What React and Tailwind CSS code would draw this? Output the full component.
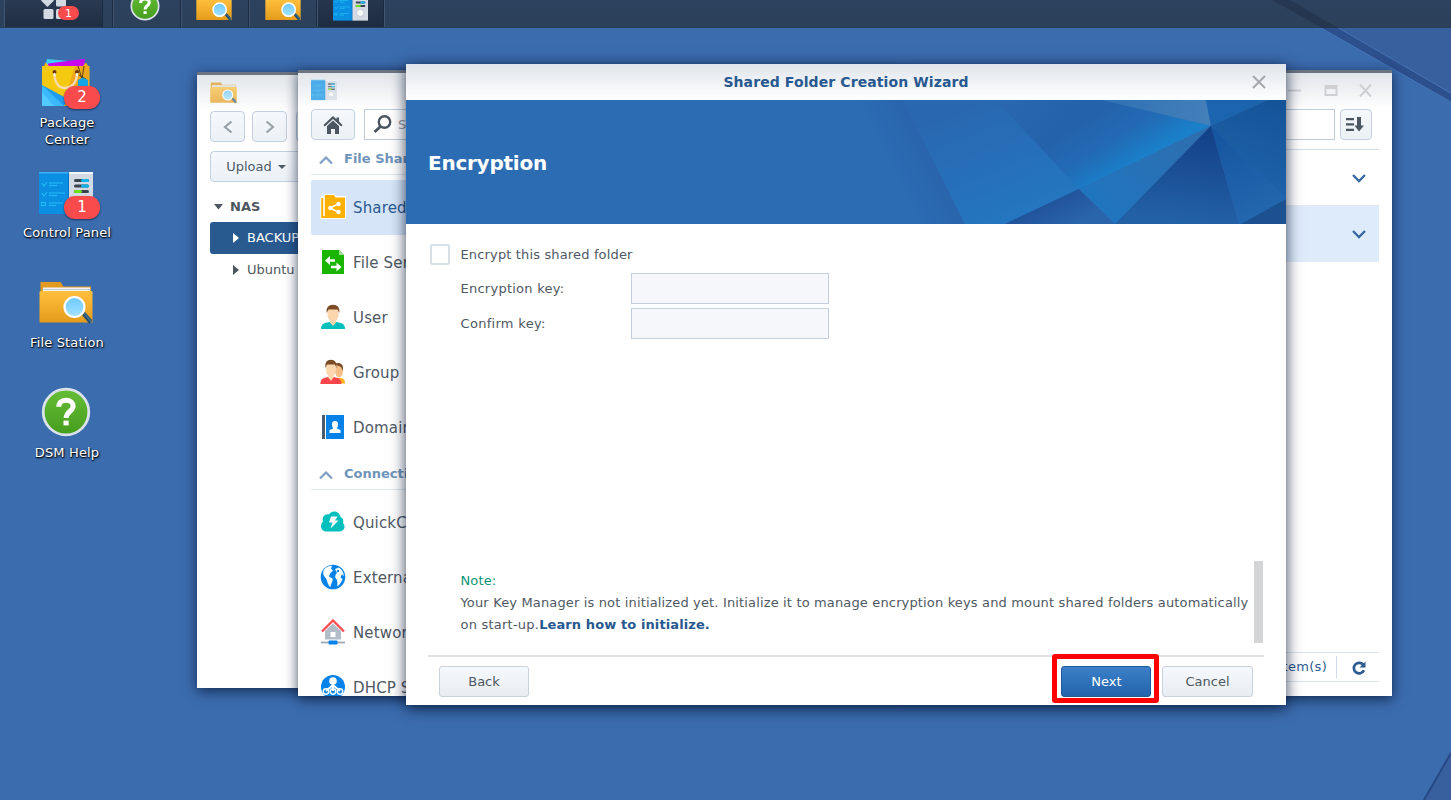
import React from "react";

function FolderIcon({ className }) {
  return (
    <svg className={className} viewBox="0 0 54 44" fill="none">
      <defs>
        <linearGradient id="folderFront" x1="0" y1="0" x2="0" y2="1">
          <stop offset="0" stopColor="#ffc03d" />
          <stop offset="1" stopColor="#e59c1c" />
        </linearGradient>
        <linearGradient id="lens" x1="0" y1="0" x2="0" y2="1">
          <stop offset="0" stopColor="#6cc8fb" />
          <stop offset="1" stopColor="#a5e3ff" />
        </linearGradient>
      </defs>
      <path d="M1.500 1h20l3 4.500h27.500V20H1.500z" fill="#e09a20" />
      <path d="M4 6.500h47v8H4z" fill="#f5f7f8" />
      <path d="M3 8.500h49M3 10.500h49" stroke="#aab6c0" strokeWidth="0.700" />
      <path d="M.5 11.500c0-1 .5-1.500 1.500-1.500h50c1 0 1.500.5 1.500 1.500V41.500H.5z" fill="url(#folderFront)" />
      <path d="M43 34l3-3 7 8-2.500 4z" fill="#24506f" />
      <path d="M45 32l7.500 9" stroke="#3b7192" strokeWidth="1.500" />
      <circle cx="35.500" cy="26" r="10" fill="url(#lens)" stroke="#fff" strokeWidth="2.200" />
    </svg>
  );
}

function PanelIcon({ className }) {
  return (
    <svg className={className} viewBox="0 0 54 42" fill="none">
      <path d="M0 0h30v42H0z" fill="#0a8fe3" />
      <path d="M0 0h30v1.500H0z" fill="#3fb2f5" />
      <path d="M29 0l1 1v41h-1z" fill="#0873c4" />
      <path d="M30 0h24v42H30z" fill="#d4dae4" />
      <path d="M30 0h24v2H30z" fill="#f3f6fa" />
      <path d="M3 11l2 3 3-4M3 21l2 3 3-4M2.500 30.500h4v3h-4zM10 11h14M10 13.500h8M10 21h16M10 23.500h8M10 31h14M10 33.500h7" stroke="#25bdf7" strokeWidth="1.100" />
      <rect x="35" y="7" width="15" height="3" rx="1.500" fill="#39444f" />
      <rect x="42" y="7" width="8" height="3" rx="1.500" fill="#12b5ee" />
      <rect x="35" y="12.500" width="15" height="3" rx="1.500" fill="#39444f" />
      <rect x="42" y="12.500" width="8" height="3" rx="1.500" fill="#12b5ee" />
      <rect x="35" y="18" width="15" height="3" rx="1.500" fill="#39444f" />
      <rect x="35" y="18" width="8" height="3" rx="1.500" fill="#6be014" />
      <circle cx="42" cy="30" r="5.500" fill="#f7f9fa" stroke="#b5becb" />
    </svg>
  );
}

function PackageIcon({ className }) {
  return (
    <svg className={className} viewBox="0 0 48 49" fill="none">
      <path d="M5 1l22 2-2 7H3z" fill="#3bd0f5" />
      <path d="M6 5.500L43 .8 42 10H6z" fill="#ca08ee" />
      <path d="M0 8h2l1.500-3.500L7 8h34l3-3.500L46 8h1.500v40H0z" fill="#f3b312" />
      <path d="M0 8h34L22 48H0z" fill="#f5c90f" />
      <path d="M33 8h14v40H20z" fill="#eca51d" opacity=".8" />
      <path d="M0 27l26 14-4 7H0z" fill="#1f9df0" />
      <path d="M0 27l22 21H0z" fill="#3bb9fb" />
      <path d="M0 48V34l12 14z" fill="#51cafd" />
      <path d="M12.500 15c0 11 5 15 10.500 15S35 26 35 15" stroke="#f8dcae" strokeWidth="2.400" />
      <circle cx="12.500" cy="14" r="2" fill="#6d3a00" />
      <circle cx="35" cy="14" r="2" fill="#6d3a00" />
      <path d="M12.500 15v3M35 15v3" stroke="#fff" strokeWidth="1.600" />
      <path d="M36 8l4 13 2-13M37 17l7 4" stroke="#5d4210" strokeWidth="1" />
      <path d="M36 22l5-2.500L46 22v9H36z" fill="#14a5e8" />
    </svg>
  );
}

function HelpIcon({ className }) {
  return (
    <svg className={className} viewBox="0 0 50 50" fill="none">
      <defs>
        <linearGradient id="helpGreen" x1="0" y1="0" x2="0" y2="1">
          <stop offset="0" stopColor="#66bd36" />
          <stop offset="1" stopColor="#459d1d" />
        </linearGradient>
      </defs>
      <circle cx="25" cy="25" r="22.800" fill="url(#helpGreen)" stroke="#dbe2ea" strokeWidth="2.800" />
      <path d="M17.800 19.800c0-4.300 3-6.500 7.300-6.500s7 2.300 7 5.900c0 5.200-6.900 5-6.900 11.800" stroke="#fff" strokeWidth="5" />
      <rect x="22.500" y="33.600" width="5.200" height="4.800" fill="#fff" />
    </svg>
  );
}

function Badge({ children }) {
  return (
    <span className="absolute left-[25px] top-[29px] flex h-[23px] w-[36px] items-center justify-center rounded-[11px] bg-[#f94b4c] text-[15px] leading-none text-white shadow-[0_1px_2px_rgba(10,30,60,0.7)]">
      {children}
    </span>
  );
}

function DesktopIcon({ label, badge, children }) {
  return (
    <div className="flex h-[110px] w-[120px] flex-col items-center">
      <div className="relative flex h-[52px] w-[54px] items-center justify-center">
        {children}
        {badge && <Badge>{badge}</Badge>}
      </div>
      <div className="ml-[2px] mt-[5px] w-[110px] text-center text-[13px] leading-[17px] tracking-[0.15px] text-white [text-shadow:1px_1px_2px_#000,0_1px_1px_rgba(0,0,0,0.7)]">
        {label}
      </div>
    </div>
  );
}

function Task({ className, children }) {
  return (
    <div
      className={
        "flex h-full shrink-0 justify-center overflow-hidden border-l border-l-[#1b2a40] shadow-[inset_1px_0_0_#405572] " +
        className
      }
    >
      {children}
    </div>
  );
}

function Taskbar() {
  return (
    <div className="relative flex h-[28px] shrink-0 overflow-hidden border-b border-[#2a3d57] bg-gradient-to-b from-[#2d425f] to-[#2c4059]">
      <div className="relative ml-[4px] flex w-[98px] shrink-0 bg-gradient-to-b from-[#2a3a53] to-[#202e42] shadow-[inset_1px_0_0_#405572,1px_0_0_#1b2a40]">
        <svg className="ml-[37px] h-[20px] w-[27px]" viewBox="0 0 27 20" fill="#d3d9e2">
          <path d="M6.500-6l6.500 6.500-6.500 6.500L0 .5z" />
          <rect x="15" y="-3" width="10" height="9.500" rx="1.500" />
          <rect x="2.500" y="9" width="10" height="10" rx="1.500" />
          <rect x="15" y="9" width="10" height="10" rx="1.500" />
        </svg>
        <span className="absolute left-[54px] top-[6px] flex h-[14px] w-[21px] items-center justify-center rounded-[7px] bg-[#f94b4c] text-[11px] leading-none text-white">
          1
        </span>
      </div>
      <div className="w-[10px] shrink-0" />
      <Task className="w-[68px] pr-[3px]">
        <HelpIcon className="-mt-[9px] h-[30px] w-[30px] shrink-0" />
      </Task>
      <Task className="w-[68px] pr-[3px]">
        <FolderIcon className="-mt-[8px] ml-[1px] h-[30px] w-[36px] shrink-0" />
      </Task>
      <Task className="w-[68px]">
        <FolderIcon className="-mt-[8px] h-[30px] w-[36px] shrink-0" />
      </Task>
      <Task className="w-[67px] bg-gradient-to-b from-[#26364d] to-[#1e2c40]">
        <PanelIcon className="-mt-[7px] h-[28px] w-[35px] shrink-0" />
      </Task>
      <div className="w-[3px] border-l border-l-[#1b2a40] shadow-[inset_1px_0_0_#405572]" />
    </div>
  );
}

function IconButton({ className, children }) {
  return (
    <button
      className={
        "flex h-[31px] shrink-0 items-center justify-center rounded-[4px] border border-[#c3d0de] bg-gradient-to-b from-[#f5f8fc] to-[#ecf1f6] " +
        className
      }
    >
      {children}
    </button>
  );
}

function FileStationWindow() {
  return (
    <section className="absolute left-[197px] top-[72px] flex h-[616px] w-[700px] flex-col border-t-[3px] border-[#6b747f] bg-white shadow-[0_3px_12px_rgba(5,20,50,0.75)]">
      <div className="flex h-[36px] shrink-0 items-center bg-gradient-to-b from-[#e2e6ea] to-white pl-[13px]">
        <FolderIcon className="h-[22px] w-[27px] opacity-70" />
      </div>
      <div className="flex gap-[7px] pl-[13px]">
        <IconButton className="w-[35px]">
          <svg className="h-[14px] w-[10px]" viewBox="0 0 10 14" fill="none" stroke="#98a1aa" strokeWidth="2.200">
            <path d="M8.500 1.500L2 7l6.500 5.500" />
          </svg>
        </IconButton>
        <IconButton className="w-[35px]">
          <svg className="h-[14px] w-[10px]" viewBox="0 0 10 14" fill="none" stroke="#98a1aa" strokeWidth="2.200">
            <path d="M1.500 1.500L8 7l-6.500 5.500" />
          </svg>
        </IconButton>
        <IconButton className="ml-[2px] w-[35px]" />
      </div>
      <div className="mt-[9px] pl-[13px]">
        <IconButton className="w-[92px] gap-[6px] text-[13px] tracking-[0px] text-[#4f5a65]">
          Upload
          <svg className="h-[4px] w-[8px]" viewBox="0 0 8 4" fill="#4f5a65">
            <path d="M0 0h8L4 4z" />
          </svg>
        </IconButton>
      </div>
      <div className="mt-[8px] ml-[13px] w-[200px] text-[13px]">
        <div className="flex h-[32px] items-center gap-[7px] pl-[4px] pt-[1px] font-bold text-[#4d5761]">
          <svg className="h-[6px] w-[9px]" viewBox="0 0 9 6" fill="#4d5761">
            <path d="M0 0h9L4.500 5.500z" />
          </svg>
          NAS
        </div>
        <div className="flex h-[32px] items-center gap-[8px] rounded-[3px] bg-[#28598f] pl-[23px] text-white">
          <svg className="h-[10px] w-[6px]" viewBox="0 0 6 10" fill="#fff">
            <path d="M0 0v10l6-5z" />
          </svg>
          BACKUP
        </div>
        <div className="flex h-[32px] items-center gap-[8px] pl-[23px] text-[#4d5761]">
          <svg className="h-[10px] w-[6px]" viewBox="0 0 6 10" fill="#4d5761">
            <path d="M0 0v10l6-5z" />
          </svg>
          Ubuntu
        </div>
      </div>
    </section>
  );
}

const I = "h-[26px] w-[26px] shrink-0";

function Person({ x, body, hair, skin }) {
  return (
    <g transform={`translate(${x} 0)`}>
      <path d="M.5 25c0-5 3-6 8.500-7h7c5.500 1 8.500 2 8.500 7z" fill={body} />
      <path d="M9.500 14h6v4.500l-3 3.500-3-3.500z" fill={skin} />
      <path d="M7 5h11v6c0 4-3 7-5.500 7S7 15 7 11z" fill={skin} />
      <path d="M6.200 9C5.500 3.500 8 .8 12.500.8s7 2.700 6.300 8.200l-1.800-3.500H8z" fill={hair} />
    </g>
  );
}

const icons = {
  shared: (
    <svg className={I} viewBox="0 0 26 26" fill="none">
      <path d="M.5 2v23H26V2H16l-2-2H3.500v2z" fill="#fff" />
      <path d="M2.200 4v19h3" stroke="#ffb000" strokeWidth="2" />
      <path d="M4.800 1h9l2 2.500H25v20.500H4.800z" fill="#ffb000" />
      <path d="M10 14l8-4M10 14l8 4" stroke="#fff" strokeWidth="1.500" />
      <circle cx="10.500" cy="14" r="2.300" fill="#fff" />
      <circle cx="18.500" cy="10" r="2.200" fill="#fff" />
      <circle cx="18.500" cy="18" r="2.200" fill="#fff" />
    </svg>
  ),
  file: (
    <svg className={I} viewBox="0 0 26 26" fill="none">
      <path d="M2 1h17l5 5v19H2z" fill="#19b500" />
      <path d="M19 1l5 5h-5z" fill="#9fe391" />
      <path d="M15 11.500H8M11 18h8" stroke="#fff" strokeWidth="2.600" />
      <path d="M10 7v9l-5-4.500zM16.500 13.500v9l5-4.500z" fill="#fff" />
    </svg>
  ),
  user: (
    <svg className={I} viewBox="0 0 26 26">
      <Person x={0.5} body="#00bfbc" hair="#7b4b25" skin="#fbd6af" />
    </svg>
  ),
  group: (
    <svg className={I} viewBox="0 0 26 26">
      <path d="M12 24.500c2-5 5-6 8-5.500 4 .5 5 2 5 5.500z" fill="#ffb21a" />
      <ellipse cx="19" cy="12" rx="4" ry="6.500" fill="#f2bd86" />
      <path d="M14 5c5-2 10-1 9 7l-2-4z" fill="#7b4b25" />
      <g transform="translate(-.5 0) scale(.88 1)">
        <Person x={0.5} body="#fb474c" hair="#7b4b25" skin="#fbd6af" />
      </g>
    </svg>
  ),
  domain: (
    <svg className={I} viewBox="0 0 26 26">
      <path d="M2 1h3v24H2z" fill="#4a5b6d" />
      <path d="M6 1h18v24H6z" fill="#0682e8" />
      <path d="M15 7c2.500 0 3.500 2 3 4.500-.3 1.500-1 2-1.200 3l3.700 1.500v3h-11v-3l3.700-1.500c-.2-1-.9-1.500-1.200-3C11.500 9 12.500 7 15 7z" fill="#fff" />
    </svg>
  ),
  quick: (
    <svg className={I} viewBox="0 0 26 26">
      <path d="M6.500 22.500C3 22.500 1 20 1 17c0-2 1-3.500 2-4.300C1.500 8 5 4.500 9 5.500 11 1.500 19 1 20.500 8c2.500 1 3.500 3.500 2.500 6 3 3 1.500 8.500-3.500 8.500z" fill="#00bfbc" />
      <path d="M11 7.500h6.500L15 11.500h3.500l-8 8 2-6H9z" fill="#fff" />
    </svg>
  ),
  external: (
    <svg className={I} viewBox="0 0 26 26">
      <circle cx="13" cy="13" r="12.300" fill="#0682e8" />
      <path d="M4 5.500C6 3 9 1.800 12 1.800l-1 3 2 1.700-3 3-1 3 3.500 2c1 2-1.500 4.500-2 8.500-3-2-3-6-4.500-8.500C3 11 2.500 9 4 5.500zM15 5l4-1.500c3 2 5 5 4.700 9L22 10l-1.500 3.500 2 1.500c-1 3-3 6-5 7.500-.5-3 .5-5-1-7.500-2-1.500-1.500-4 .5-6z" fill="#fff" />
      <circle cx="18" cy="7" r="1.200" fill="#0682e8" />
    </svg>
  ),
  network: (
    <svg className={I} viewBox="0 0 26 26" fill="none">
      <path d="M5 12l8-7.500 8 7.500v8.500H5z" fill="#b2bdc9" />
      <path d="M2 12.500l11-11 11 11" stroke="#fb4f53" strokeWidth="2.400" />
      <path d="M10.500 13h5v5h-5z" fill="#fff" />
      <path d="M1 23.500h24" stroke="#9daab8" strokeWidth="1.800" />
      <rect x="8.500" y="21.500" width="9" height="4" rx="1" fill="#0682e8" />
    </svg>
  ),
  dhcp: (
    <svg className={I} viewBox="0 0 26 26" fill="none">
      <circle cx="13" cy="13" r="12" fill="#0682e8" />
      <path d="M13 7v10M13 11l-7 6M13 11l7 6" stroke="#fff" strokeWidth="2" />
      <circle cx="13" cy="7" r="3.800" fill="#fff" />
      <circle cx="6" cy="17.500" r="2.700" stroke="#fff" strokeWidth="1.500" />
      <circle cx="13" cy="17.500" r="2.700" stroke="#fff" strokeWidth="1.500" />
      <circle cx="20" cy="17.500" r="2.700" stroke="#fff" strokeWidth="1.500" />
    </svg>
  ),
};

function SideHeading({ children }) {
  return (
    <div className="mb-[5px] flex h-[35px] shrink-0 items-center gap-[11px] border-b border-[#dfe7ef] pl-[8px] pt-[4px] text-[13px] font-bold text-[#6f94ba]">
      <svg className="mt-[2px] h-[8px] w-[14px]" viewBox="0 0 14 8" fill="none" stroke="#7e9fc3" strokeWidth="2.200">
        <path d="M1 7.500l6-6 6 6" />
      </svg>
      {children}
    </div>
  );
}

function SideItem({ icon, active, children }) {
  return (
    <div
      className={
        "flex h-[55px] shrink-0 items-center gap-[7px] rounded-[2px] pl-[9px] text-[15px] tracking-[0.15px] " +
        (active ? "bg-[#d6e6f8] text-[#2b5a92]" : "text-[#4f5964]")
      }
    >
      <span className="-mt-[1px]">{icons[icon]}</span>
      <span className="w-[80px] overflow-hidden whitespace-nowrap pt-[1px]">{children}</span>
    </div>
  );
}

function Chevron() {
  return (
    <svg className="h-[9px] w-[14px]" viewBox="0 0 14 9" fill="none" stroke="#3767a1" strokeWidth="2.300">
      <path d="M1 1l6 6 6-6" />
    </svg>
  );
}

function ControlPanelWindow() {
  return (
    <section className="absolute left-[298px] top-[70px] flex h-[626px] w-[1094px] flex-col border-t-[3px] border-[#6b747f] bg-white shadow-[0_3px_12px_rgba(5,20,50,0.75)]">
      <div className="flex h-[36px] shrink-0 items-center justify-between bg-gradient-to-b from-[#e1e5ea] to-white pl-[13px] pr-[19px]">
        <PanelIcon className="-mt-[2px] h-[22px] w-[26px] opacity-70" />
        <svg className="h-[14px] w-[86px]" viewBox="0 0 86 14" fill="none" stroke="#cdcfd2" strokeWidth="2">
          <path d="M1 6.500h13" />
          <path d="M38.500 2h11v9h-11z" />
          <path d="M38 3.500h12" strokeWidth="3" />
          <path d="M73 .5l11 12M84 .5l-11 12" />
        </svg>
      </div>
      <div className="flex min-h-0 flex-1 pl-[13px] pr-[13px]">
        <aside className="flex w-[130px] shrink-0 flex-col overflow-hidden">
          <div className="flex shrink-0 gap-[9px]">
            <IconButton className="w-[44px]">
              <svg className="h-[18px] w-[20px]" viewBox="0 0 20 18" fill="#4b5661">
                <path d="M10 0l3.500 3.200V1.500h2.500v4L19.500 9l-1.300 1.400L10 3 1.800 10.400.5 9z" />
                <path d="M10 4.500l6 5.500v8h-4v-5H8v5H4v-8z" />
              </svg>
            </IconButton>
            <div className="flex h-[31px] flex-1 items-center gap-[6px] border border-[#bccbdb] pl-[8px] text-[13px] text-[#9299a2]">
              <svg className="h-[19px] w-[19px] shrink-0" viewBox="0 0 19 19" fill="none" stroke="#4b5661">
                <circle cx="11.500" cy="7" r="5.700" strokeWidth="2.400" />
                <path d="M7.500 11.500L1.500 17" strokeWidth="3" />
              </svg>
              Search
            </div>
          </div>
          <SideHeading>File Sharing</SideHeading>
          <SideItem icon="shared" active>Shared Folder</SideItem>
          <SideItem icon="file">File Services</SideItem>
          <SideItem icon="user">User</SideItem>
          <SideItem icon="group">Group</SideItem>
          <SideItem icon="domain">Domain/LDAP</SideItem>
          <SideHeading>Connectivity</SideHeading>
          <SideItem icon="quick">QuickConnect</SideItem>
          <SideItem icon="external">External Access</SideItem>
          <SideItem icon="network">Network</SideItem>
          <SideItem icon="dhcp">DHCP Server</SideItem>
        </aside>
        <main className="ml-[12px] flex min-w-0 flex-1 flex-col">
          <div className="flex h-[41px] shrink-0 justify-end gap-[5px] border-b border-[#d3dfeb] pr-[7px]">
            <div className="h-[31px] w-[200px] border border-[#bccbdb]" />
            <IconButton className="w-[32px]">
              <svg className="-ml-[2px] h-[15px] w-[18px]" viewBox="0 0 18 15" fill="#4b5661">
                <path d="M0 1h8v2.300H0zM0 6.300h8v2.300H0zM0 11.700h8v2.300H0z" />
                <path d="M11 0h4v8.500h3L13 14.500 8.500 8.500H11z" />
              </svg>
            </IconButton>
          </div>
          <div className="flex h-[55px] shrink-0 items-center justify-end pr-[13px] pt-[1px]">
            <Chevron />
          </div>
          <div className="flex h-[57px] shrink-0 items-center justify-end border-t border-[#e6eaef] bg-[#deebfa] pr-[13px]">
            <Chevron />
          </div>
          <div className="flex-1" />
          <div className="mb-[14px] flex h-[30px] shrink-0 items-center justify-end border-y border-[#d9e3ee] pr-[13px] text-[13px] tracking-[0.3px] text-[#2c5c92]">
            2 item(s)
            <span className="ml-[9px] mr-[15px] h-[22px] w-px bg-[#cfdbe8]" />
            <svg className="mt-[1px] h-[14px] w-[14px]" viewBox="0 0 14 14" fill="none">
              <path d="M11.500 4A5.300 5.300 0 1 0 12 9.300" stroke="#2c5c92" strokeWidth="2.700" />
              <path d="M13.500.5v6H7.500z" fill="#2c5c92" />
            </svg>
          </div>
        </main>
      </div>
    </section>
  );
}

function BannerArt() {
  return (
    <svg className="absolute inset-0 h-full w-full" viewBox="0 0 880 124" preserveAspectRatio="none">
      <defs>
        <linearGradient id="facetShade" x1="488" y1="72" x2="528" y2="52" gradientUnits="userSpaceOnUse">
          <stop offset="0" stopColor="#2b6cb3" />
          <stop offset="1" stopColor="#2963ab" />
        </linearGradient>
        <linearGradient id="facetMid" x1="560" y1="0" x2="610" y2="124" gradientUnits="userSpaceOnUse">
          <stop offset="0" stopColor="#2967b0" />
          <stop offset="1" stopColor="#2377c0" />
        </linearGradient>
        <linearGradient id="facetGlow" x1="705" y1="5" x2="738" y2="58" gradientUnits="userSpaceOnUse">
          <stop offset="0" stopColor="#2463ac" />
          <stop offset=".5" stopColor="#226ab4" />
          <stop offset="1" stopColor="#1a80ca" />
        </linearGradient>
        <linearGradient id="facetGlowFade" x1="590" y1="0" x2="665" y2="60" gradientUnits="userSpaceOnUse">
          <stop offset=".1" stopColor="#2967b0" />
          <stop offset=".7" stopColor="#2967b0" stopOpacity="0" />
        </linearGradient>
        <linearGradient id="facetLow" x1="790" y1="30" x2="700" y2="124" gradientUnits="userSpaceOnUse">
          <stop offset="0" stopColor="#2e6eae" />
          <stop offset="1" stopColor="#1f75c0" />
        </linearGradient>
        <linearGradient id="facetDeep" x1="640" y1="100" x2="655" y2="130" gradientUnits="userSpaceOnUse">
          <stop offset="0" stopColor="#1f5199" />
          <stop offset="1" stopColor="#2a64ab" />
        </linearGradient>
        <linearGradient id="facetDark" x1="800" y1="25" x2="790" y2="124" gradientUnits="userSpaceOnUse">
          <stop offset="0" stopColor="#123f86" />
          <stop offset="1" stopColor="#2361a7" />
        </linearGradient>
        <linearGradient id="facetLight" x1="700" y1="0" x2="800" y2="20" gradientUnits="userSpaceOnUse">
          <stop offset="0" stopColor="#3071b4" />
          <stop offset="1" stopColor="#437fb9" />
        </linearGradient>
        <linearGradient id="facetEast" x1="870" y1="0" x2="840" y2="80" gradientUnits="userSpaceOnUse">
          <stop offset="0" stopColor="#145398" />
          <stop offset="1" stopColor="#1e61a8" />
        </linearGradient>
        <linearGradient id="facetSouth" x1="810" y1="30" x2="850" y2="124" gradientUnits="userSpaceOnUse">
          <stop offset="0" stopColor="#15559f" />
          <stop offset="1" stopColor="#2468b0" />
        </linearGradient>
      </defs>
      <path d="M420 0h77l62 124H420z" fill="url(#facetShade)" />
      <path d="M497 0h240l-64 89-74 35h-40z" fill="url(#facetMid)" />
      <path d="M590 0h106l109 25.700L673 89z" fill="url(#facetGlow)" />
      <path d="M590 0h106l109 25.700L673 89z" fill="url(#facetGlowFade)" />
      <path d="M673 89l-74 35h110z" fill="url(#facetDeep)" />
      <path d="M673 89l132-63.300L709 124z" fill="url(#facetLow)" />
      <path d="M805 25.700L709 124h124z" fill="url(#facetDark)" />
      <path d="M696 0h104l5 25.700z" fill="url(#facetLight)" />
      <path d="M800 0h62l-57 25.700z" fill="#1d64af" />
      <path d="M862 0h18v99l-75-73.300z" fill="url(#facetEast)" />
      <path d="M805 25.700L880 99l-44 25h-3z" fill="url(#facetSouth)" />
      <path d="M880 99l-45 25h45z" fill="#1b5190" />
    </svg>
  );
}

function WizardButton({ className, children }) {
  return (
    <button
      className={
        "flex h-[31px] shrink-0 items-center justify-center rounded-[3px] border text-[13px] tracking-[0px] " +
        className
      }
    >
      {children}
    </button>
  );
}

const plainButton = "border-[#c8d1dc] bg-gradient-to-b from-[#f5f8fc] to-[#e9edf2] text-[#4d5761]";

function Wizard() {
  return (
    <section className="absolute left-[406px] top-[64px] flex h-[641px] w-[880px] flex-col bg-white text-[13px] tracking-[0.15px] text-[#4f5963] shadow-[0_3px_14px_rgba(0,15,45,0.8)]">
      <header className="relative flex h-[36px] shrink-0 items-center justify-center bg-gradient-to-b from-[#e0e5eb] to-white text-[14px] font-bold tracking-[0.1px] text-[#27588f]">
        <span>Shared Folder Creation Wizard</span>
        <svg className="absolute right-[20px] top-[11px] h-[14px] w-[14px]" viewBox="0 0 14 14" fill="none" stroke="#a4a8ad" strokeWidth="2">
          <path d="M1 1l12 12M13 1L1 13" />
        </svg>
      </header>
      <div className="relative flex h-[124px] shrink-0 items-center bg-[#2b6cb3] pl-[22px]">
        <BannerArt />
        <h1 className="relative pt-[1px] text-[20px] font-bold tracking-[-0.25px] text-white">Encryption</h1>
      </div>
      <div className="flex flex-col pl-[24px] pt-[20px]">
        <label className="flex h-[21px] items-center gap-[10.5px]">
          <span className="h-[21px] w-[20px] rounded-[2px] border-2 border-[#d9dfe7] bg-white" />
          <span>Encrypt this shared folder</span>
        </label>
        <div className="mt-[8px] flex h-[31px] items-center pl-[30.5px]">
          <span className="w-[170.5px] tracking-[0.25px]">Encryption key:</span>
          <span className="h-[31px] w-[198px] border border-[#c3cfdd] bg-[#f6f7fa]" />
        </div>
        <div className="mt-[4px] flex h-[31px] items-center pl-[30.5px]">
          <span className="w-[170.5px] tracking-[0.3px]">Confirm key:</span>
          <span className="h-[31px] w-[198px] border border-[#c3cfdd] bg-[#f6f7fa]" />
        </div>
      </div>
      <div className="flex-1" />
      <div className="mb-[12px] flex h-[82px] shrink-0 justify-between pl-[54.5px] pr-[23px]">
        <div className="whitespace-nowrap pt-[9px] leading-[22px]">
          <div className="text-[#0b9478]">Note:</div>
          <div>Your Key Manager is not initialized yet. Initialize it to manage encryption keys and mount shared folders automatically</div>
          <div className="tracking-[0.23px]">
            on start-up.<b className="tracking-[0.1px] text-[#27588f]">Learn how to initialize.</b>
          </div>
        </div>
        <div className="h-[82px] w-[9px] bg-[#d4d5d7]" />
      </div>
      <footer className="mx-[22px] flex h-[50px] shrink-0 items-start border-t-2 border-[#dfe1e3] px-[11px]">
        <div className="mt-[9px]">
          <WizardButton className={"w-[90px] " + plainButton}>Back</WizardButton>
        </div>
        <div className="flex-1" />
        <div className="-mt-[3px] mr-[3px] flex h-[49px] w-[107px] shrink-0 items-center justify-center rounded-[3px] border-[5px] border-[#fe0000] pt-[6px]">
          <WizardButton className="w-[90px] border-[#21599a] bg-gradient-to-b from-[#3b80c9] to-[#2364ab] pl-[2px] text-white">Next</WizardButton>
        </div>
        <div className="mt-[9px]">
          <WizardButton className={"w-[91px] " + plainButton}>Cancel</WizardButton>
        </div>
      </footer>
    </section>
  );
}

function Wallpaper() {
  return (
    <svg className="absolute inset-0 h-full w-full" viewBox="0 0 1451 800" fill="none">
      <path d="M1272 0h179v101z" fill="#38609f" />
      <path d="M1272 0h20l159 94v8z" fill="#2c4f8e" />
      <path d="M1290 0l161 93" stroke="#4773b4" />
      <path d="M1272 0l179 102" stroke="#4676b8" />
      <path d="M1424 800l27-48v48z" fill="#38609f" />
      <path d="M1424 800l27-47" stroke="#264884" strokeWidth="2" />
    </svg>
  );
}

export default function App() {
  return (
    <div className="relative flex h-[800px] w-[1451px] flex-col overflow-hidden bg-[#3b6cae] font-['DejaVu_Sans',sans-serif]">
      <Wallpaper />
      <Taskbar />
      <svg className="absolute right-0 top-0 h-[28px] w-[200px]" viewBox="0 0 200 28">
        <path d="M21 0h18l48 28H71z" fill="#1d2b43" opacity=".45" />
      </svg>
      <nav className="relative flex flex-col pl-[6px] pt-[29px]">
        <DesktopIcon label={<>Package<br />Center</>} badge="2">
          <PackageIcon className="-mt-[2px] h-[49px] w-[48px]" />
        </DesktopIcon>
        <DesktopIcon label="Control Panel" badge="1">
          <PanelIcon className="h-[42px] w-[54px]" />
        </DesktopIcon>
        <DesktopIcon label="File Station">
          <FolderIcon className="h-[44px] w-[54px]" />
        </DesktopIcon>
        <DesktopIcon label="DSM Help">
          <HelpIcon className="-mt-[2px] h-[50px] w-[50px]" />
        </DesktopIcon>
      </nav>
      <FileStationWindow />
      <ControlPanelWindow />
      <Wizard />
    </div>
  );
}
